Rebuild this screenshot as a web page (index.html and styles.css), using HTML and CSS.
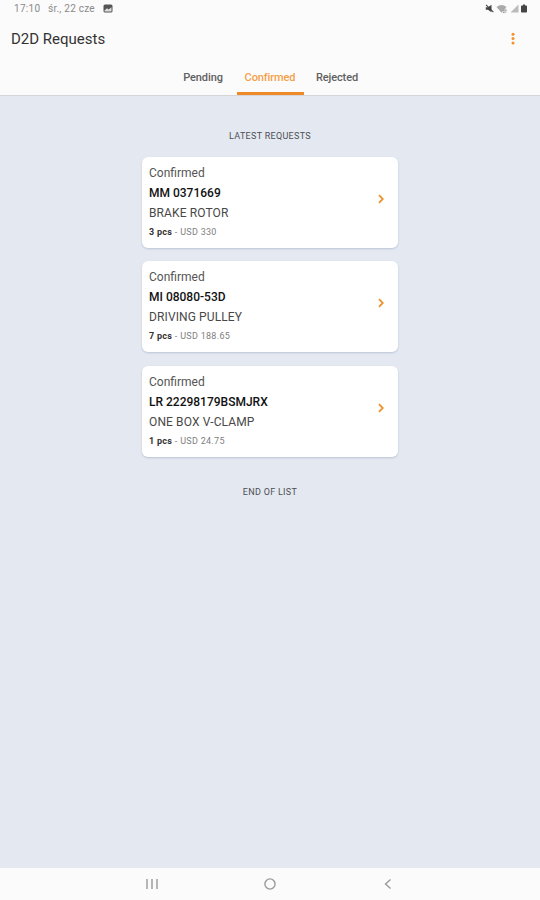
FILE: index.html
```html
<!DOCTYPE html>
<html lang="en">
<head>
    <meta charset="UTF-8">
    <meta name="viewport" content="width=device-width, initial-scale=1.0">
    <title>D2D Requests</title>
    <link rel="stylesheet" href="styles.css">
</head>
<body>
    <header class="header">
        <div class="status-bar">
            <span class="time">17:10</span>
            <span class="date">śr., 22 cze</span>
            <svg class="picture" width="10" height="9" viewBox="0 0 10 9">
                <rect x="0.5" y="0.5" width="9" height="8" rx="1.5" fill="#555"/>
                <path d="M1.5 6.5L4 4.2L5.6 5.6L8.5 3.2V7.5H1.5Z" fill="#ddd"/>
            </svg>
            <div class="status-icons">
                <svg width="9" height="9" viewBox="0 0 9 9">
                    <path d="M0.8 3.2H3L6.5 0.8V8.2L3 5.8H0.8Z" fill="#444"/>
                    <path d="M1 0.8L8.4 8.2" stroke="#444" stroke-width="1.1"/>
                </svg>
                <svg width="12" height="10" viewBox="0 0 12 10">
                    <path d="M0.5 3Q5.5 -1.2 10.5 3L5.5 8.8Z" fill="#aaa"/>
                    <path d="M7 6.2H10.5M9.3 5L10.5 6.2M10.5 8H7M8.2 9.2L7 8" stroke="#888" stroke-width="0.8" fill="none"/>
                </svg>
                <svg width="9" height="9" viewBox="0 0 9 9">
                    <path d="M0.5 8.5L8.5 0.5V8.5Z" fill="#bbb"/>
                </svg>
                <svg width="6" height="9" viewBox="0 0 6 9">
                    <path d="M2 0.5H4V1.5H5.2Q6 1.5 6 2.3V7.7Q6 8.5 5.2 8.5H0.8Q0 8.5 0 7.7V2.3Q0 1.5 0.8 1.5H2Z" fill="#444"/>
                </svg>
            </div>
        </div>
        <div class="title-bar">
            <h1>D2D Requests</h1>
            <svg class="menu" width="4" height="14" viewBox="0 0 4 14">
                <circle cx="2" cy="2.2" r="1.5"/>
                <circle cx="2" cy="6.6" r="1.5"/>
                <circle cx="2" cy="11" r="1.5"/>
            </svg>
        </div>
        <nav class="tabs">
            <a class="tab">Pending</a>
            <a class="tab active">Confirmed</a>
            <a class="tab">Rejected</a>
        </nav>
    </header>

    <main class="content">
        <p class="label">LATEST REQUESTS</p>

        <div class="card">
            <div class="info">
                <p class="status">Confirmed</p>
                <h2>MM 0371669</h2>
                <p class="part">BRAKE ROTOR</p>
                <p class="price"><b>3 pcs</b> - USD 330</p>
            </div>
            <svg class="arrow" width="6" height="10" viewBox="0 0 6 10"><path d="M1 1.2L4.8 5L1 8.8"/></svg>
        </div>

        <div class="card">
            <div class="info">
                <p class="status">Confirmed</p>
                <h2>MI 08080-53D</h2>
                <p class="part">DRIVING PULLEY</p>
                <p class="price"><b>7 pcs</b> - USD 188.65</p>
            </div>
            <svg class="arrow" width="6" height="10" viewBox="0 0 6 10"><path d="M1 1.2L4.8 5L1 8.8"/></svg>
        </div>

        <div class="card">
            <div class="info">
                <p class="status">Confirmed</p>
                <h2>LR 22298179BSMJRX</h2>
                <p class="part">ONE BOX V-CLAMP</p>
                <p class="price"><b>1 pcs</b> - USD 24.75</p>
            </div>
            <svg class="arrow" width="6" height="10" viewBox="0 0 6 10"><path d="M1 1.2L4.8 5L1 8.8"/></svg>
        </div>

        <p class="label end">END OF LIST</p>
    </main>

    <footer class="nav-bar">
        <svg width="12" height="12" viewBox="0 0 12 12"><path d="M1 1V11M6 1V11M11 1V11"/></svg>
        <svg width="12" height="12" viewBox="0 0 12 12"><circle cx="6" cy="6" r="5.1"/></svg>
        <svg width="12" height="12" viewBox="0 0 12 12"><path d="M8.5 1.5L3.5 6L8.5 10.5"/></svg>
    </footer>
</body>
</html>
```
FILE: styles.css
```css
* {
    box-sizing: border-box;
}
body {
    margin: 0;
    height: 900px;
    display: flex;
    flex-direction: column;
    background: #e4e8f0;
    font-family: Roboto, "Liberation Sans", sans-serif;
    color: #333;
}
h1, h2, p {
    margin: 0;
    font-weight: 400;
    white-space: nowrap;
}
svg {
    display: block;
    flex: none;
}
.header {
    height: 96px;
    background: #fbfbfb;
    border-bottom: 1px solid #d3d5d9;
}
.status-bar {
    display: flex;
    align-items: center;
    height: 17px;
    padding: 0 13px 0 14px;
    font-size: 10px;
    color: #8a8a8a;
}
.time {
    width: 34px;
    letter-spacing: 0.3px;
}
.date {
    letter-spacing: 0.25px;
}
.picture {
    margin-left: 8px;
}
.status-icons {
    display: flex;
    align-items: center;
    gap: 2px;
    margin-left: auto;
}
.title-bar {
    display: flex;
    align-items: center;
    justify-content: space-between;
    height: 44px;
    padding: 0 25px 0 11px;
}
.title-bar h1 {
    font-size: 15px;
}
.menu {
    fill: #f0922b;
}
.tabs {
    display: flex;
    justify-content: center;
    height: 34px;
}
.tab {
    width: 67px;
    padding-top: 10px;
    font-size: 11px;
    line-height: 14px;
    font-weight: 500;
    letter-spacing: -0.1px;
    text-align: center;
    color: #606060;
    border-bottom: 3px solid transparent;
}
.tab.active {
    color: #f5a048;
    border-color: #ee8a26;
}
.content {
    flex: 1;
    width: 256px;
    margin: 0 auto;
    padding-top: 33px;
}
.label {
    margin-bottom: 14px;
    font-size: 9px;
    line-height: 14px;
    letter-spacing: 0.3px;
    text-align: center;
    color: #4c4f54;
}
.card {
    display: flex;
    align-items: center;
    justify-content: space-between;
    height: 91px;
    margin-bottom: 13.4px;
    padding: 0 14px 0 7px;
    background: #fff;
    border-radius: 6px;
    box-shadow: 0 1px 2px rgba(90, 120, 160, 0.3);
}
.status, .card h2, .part {
    font-size: 12px;
    line-height: 20px;
}
.status {
    color: #555;
}
.card h2 {
    font-weight: 500;
    color: #111;
}
.part {
    letter-spacing: 0.12px;
    color: #484848;
}
.price {
    font-size: 9px;
    line-height: 19px;
    letter-spacing: 0.3px;
    color: #808080;
}
.price b {
    font-weight: 700;
    color: #333;
}
.arrow {
    margin-top: -7px;
    fill: none;
    stroke: #ee922f;
    stroke-width: 1.8;
}
.end {
    margin-top: 28px;
}
.nav-bar {
    display: flex;
    align-items: center;
    justify-content: space-between;
    height: 32px;
    padding: 0 146px;
    background: #fbfbfb;
    fill: none;
    stroke: #999;
    stroke-width: 1.4;
}
```
